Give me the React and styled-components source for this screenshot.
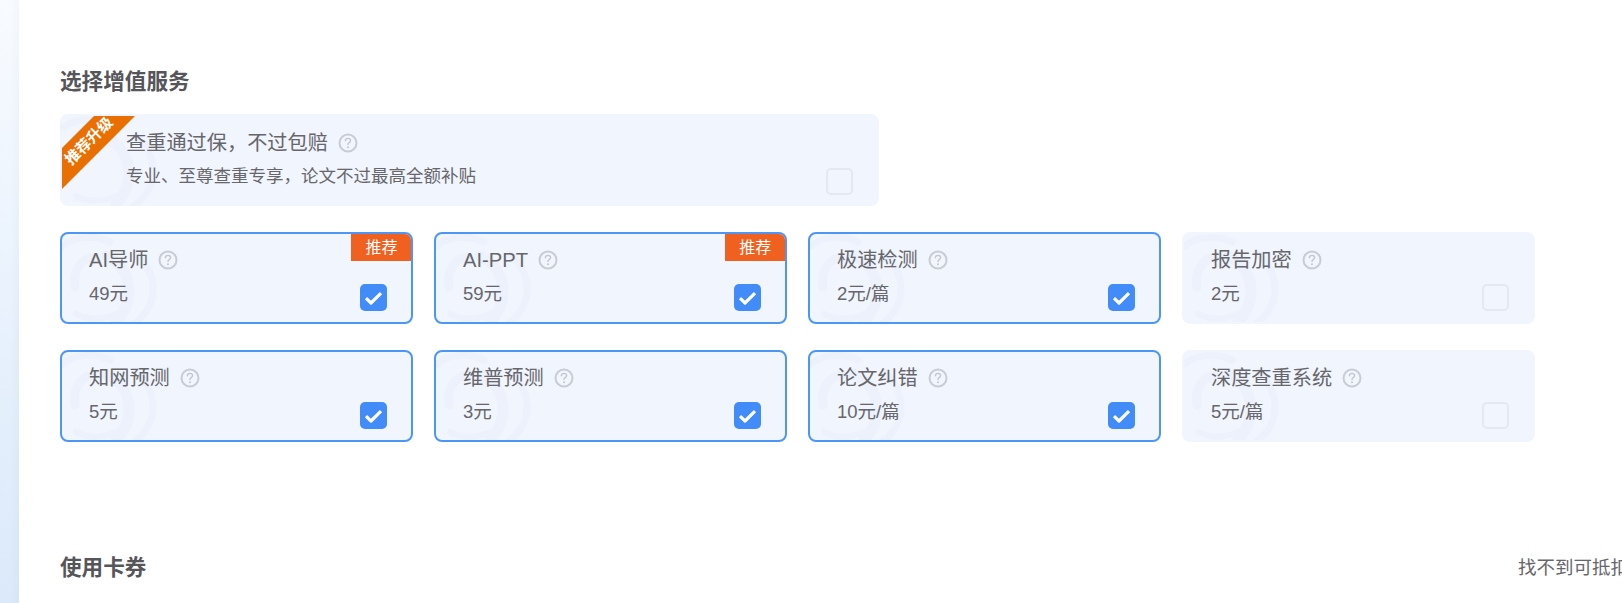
import React from 'react';
import styled, { createGlobalStyle } from 'styled-components';

const GlobalStyle = createGlobalStyle`
  html, body {
    margin: 0;
    padding: 0;
    height: 603px;
    overflow: hidden;
    background: #fff;
    font-family: "Liberation Sans", "Noto Sans CJK SC", sans-serif;
  }
`;

const Page = styled.div`
  display: flex;
  width: 1622px;
  height: 603px;
  overflow: hidden;
`;

const SideStrip = styled.div`
  flex: 0 0 19px;
  background: linear-gradient(180deg, #f8fbff 0%, #e9f2fd 50%, #dbe9fa 100%);
  box-shadow: inset -8px 0 8px -6px rgba(120, 130, 140, 0.06);
`;

const Main = styled.main`
  flex: 0 0 1700px;
  padding: 69px 0 0 41px;
  box-sizing: border-box;
`;

const Heading = styled.h2`
  margin: 0;
  font-size: 21.6px;
  line-height: 26px;
  font-weight: 700;
  color: #55555a;
`;

const CardBase = styled.div`
  position: relative;
  box-sizing: border-box;
  background: #f1f5fd;
  border-radius: 8px;
  overflow: hidden;
`;

const Banner = styled(CardBase)`
  width: 819px;
  height: 92px;
  margin-top: 19px;
  padding: 16px 16px 0 66px;
`;

const Ribbon = styled.div`
  position: absolute;
  left: 2px;
  top: 2px;
  width: 73px;
  height: 73px;
  background: #e96f02;
  clip-path: polygon(32px 0, 73px 0, 0 73px, 0 32px);
`;

const RibbonText = styled.span`
  position: absolute;
  left: -4px;
  top: 15px;
  width: 62px;
  line-height: 20px;
  text-align: center;
  font-size: 15px;
  font-weight: 700;
  color: #fff;
  white-space: nowrap;
  transform: rotate(-45deg);
`;

const Title = styled.div`
  display: flex;
  align-items: center;
  gap: 10px;
  font-size: 20.2px;
  line-height: 26px;
  color: #66666b;
`;

const BannerNote = styled.div`
  margin-top: 8px;
  font-size: 17.5px;
  line-height: 24px;
  color: #66666b;
`;

const Grid = styled.div`
  display: grid;
  grid-template-columns: repeat(4, 353.4px);
  grid-auto-rows: 92px;
  column-gap: 20.6px;
  row-gap: 26px;
  margin-top: 26px;
`;

const Card = styled(CardBase)`
  padding: 13px 0 0 27px;
  border: 2px solid ${(p) => (p.$on ? '#4c97f5' : 'transparent')};
`;

const Price = styled.div`
  margin-top: 9px;
  font-size: 18.5px;
  line-height: 24px;
  color: #66666b;
`;

const Badge = styled.div`
  position: absolute;
  top: 0;
  right: 0;
  width: 60px;
  height: 27px;
  background: #f0611f;
  color: #fff;
  font-size: 16px;
  line-height: 27px;
  text-align: center;
`;

const Check = styled.div`
  position: absolute;
  right: ${(p) => (p.$inset ? '26px' : '24px')};
  bottom: 11px;
  box-sizing: border-box;
  width: 27px;
  height: 27px;
  display: flex;
  align-items: center;
  justify-content: center;
  border-radius: 5px;
  background: ${(p) => (p.$on ? '#418cf8' : 'transparent')};
  border: ${(p) => (p.$on ? 'none' : '2px solid #e3e8f1')};
`;

const Swirl = styled.svg`
  position: absolute;
  left: -2px;
  top: -2px;
  width: 110px;
  height: 92px;
`;

const BannerSwirl = styled(Swirl)`
  left: 0;
  top: 0;
`;

const Content = styled.div`
  position: relative;
`;

const CouponRow = styled.div`
  display: flex;
  justify-content: space-between;
  align-items: center;
  margin-top: 113px;
  padding-right: 16px;
`;

const CouponNote = styled.span`
  font-size: 18.5px;
  line-height: 26px;
  color: #66666b;
  white-space: nowrap;
`;

const swirlPaths = (
  <>
    <path d="M3 14 C14 4 36 3 50 10" strokeWidth="7" />
    <path d="M76 22 C96 40 102 70 74 92" strokeWidth="7" />
    <path d="M46 24 C70 34 78 66 56 90" strokeWidth="11" />
    <path d="M15 55 C12 38 22 26 34 25" strokeWidth="9" />
    <path d="M16 82 C28 88 42 88 56 82" strokeWidth="6" />
  </>
);

const HelpIcon = () => (
  <svg width="20" height="20" viewBox="0 0 20 20" fill="none">
    <circle cx="10" cy="10" r="8.5" stroke="#c8ccd4" strokeWidth="2" />
    <path
      d="M7.4 7.8c0-1.5 1.1-2.4 2.6-2.4s2.6.9 2.6 2.2c0 1-.6 1.5-1.4 2-.8.5-1.2.9-1.2 1.9"
      stroke="#c4c7cf"
      strokeWidth="1.4"
      strokeLinecap="round"
    />
    <circle cx="10" cy="14.3" r="1" fill="#c4c7cf" />
  </svg>
);

const CheckMark = () => (
  <svg width="19" height="14" viewBox="0 0 19 14" fill="none">
    <path d="M2 7.2 L7 12 L17 2.2" stroke="#fff" strokeWidth="3.2" strokeLinejoin="round" />
  </svg>
);

const services = [
  { name: 'AI导师', price: '49元', on: true, badge: true },
  { name: 'AI-PPT', price: '59元', on: true, badge: true },
  { name: '极速检测', price: '2元/篇', on: true },
  { name: '报告加密', price: '2元', on: false },
  { name: '知网预测', price: '5元', on: true },
  { name: '维普预测', price: '3元', on: true },
  { name: '论文纠错', price: '10元/篇', on: true },
  { name: '深度查重系统', price: '5元/篇', on: false },
];

export default function App() {
  return (
    <Page>
      <GlobalStyle />
      <SideStrip />
      <Main>
        <Heading>选择增值服务</Heading>
        <Banner>
          <BannerSwirl viewBox="0 0 110 92" fill="none" stroke="#ecf1fb" strokeLinecap="round">
            {swirlPaths}
          </BannerSwirl>
          <Ribbon>
            <RibbonText>推荐升级</RibbonText>
          </Ribbon>
          <Content>
            <Title>
              {'查重通过保\uFF0C不过包赔'}
              <HelpIcon />
            </Title>
            <BannerNote>{'专业、至尊查重专享\uFF0C论文不过最高全额补贴'}</BannerNote>
          </Content>
          <Check $inset />
        </Banner>
        <Grid>
          {services.map((s) => (
            <Card key={s.name} $on={s.on}>
              <Swirl viewBox="0 0 110 92" fill="none" stroke="#ecf1fb" strokeLinecap="round">
                {swirlPaths}
              </Swirl>
              {s.badge && <Badge>推荐</Badge>}
              <Content>
                <Title>
                  {s.name}
                  <HelpIcon />
                </Title>
                <Price>{s.price}</Price>
              </Content>
              <Check $on={s.on}>{s.on && <CheckMark />}</Check>
            </Card>
          ))}
        </Grid>
        <CouponRow>
          <Heading>使用卡券</Heading>
          <CouponNote>{'找不到可抵扣的卡券\uFF1F'}</CouponNote>
        </CouponRow>
      </Main>
    </Page>
  );
}
